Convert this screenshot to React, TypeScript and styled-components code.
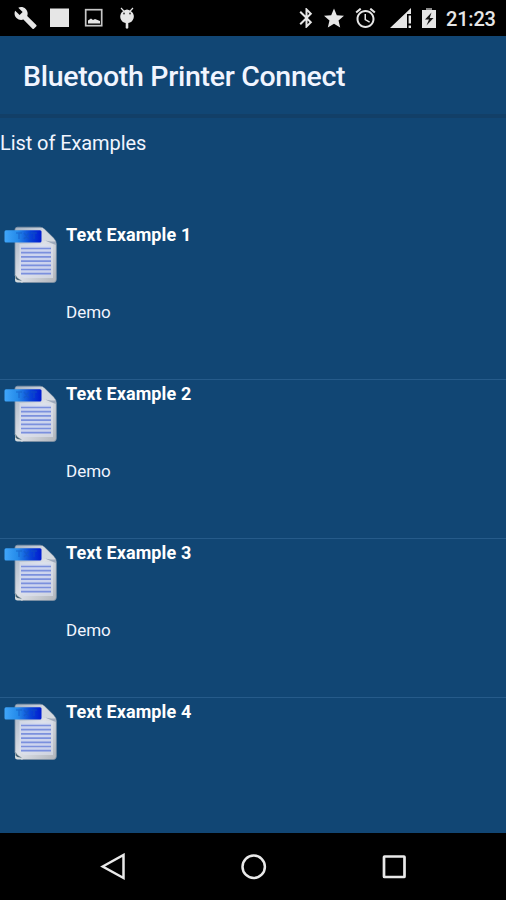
import React from "react";
import styled, { createGlobalStyle } from "styled-components";

const GlobalStyle = createGlobalStyle`
  * { box-sizing: border-box; }
  body { margin: 0; background: #114674; }
`;

const Screen = styled.div`
  width: 506px;
  height: 900px;
  display: flex;
  flex-direction: column;
  overflow: hidden;
  background: #114674;
  color: #f1f5ff;
  font-family: Roboto, "Liberation Sans", sans-serif;
`;

const StatusBar = styled.div`
  flex: none;
  height: 36px;
  padding: 0 10px 0 14px;
  display: flex;
  align-items: center;
  justify-content: space-between;
  background: #000;
  color: #e6e6e6;
`;

const StatusGroup = styled.div<{ $gap: number }>`
  display: flex;
  align-items: center;
  gap: ${(p) => p.$gap}px;
  svg { display: block; flex: none; }
`;

const Clock = styled.span`
  width: 50px;
  margin-left: -1px;
  font-size: 20px;
  line-height: 36px;
  font-weight: 500;
  letter-spacing: -0.2px;
  white-space: nowrap;
  padding-top: 2px;
`;

const AppBar = styled.header`
  flex: none;
  height: 82px;
  padding: 0 23px;
  display: flex;
  align-items: center;
  border-bottom: 4px solid #123f67;
`;

const Title = styled.h1`
  margin: 3px 0 0;
  font-size: 28.5px;
  line-height: 34px;
  font-weight: 500;
  letter-spacing: -0.3px;
  white-space: nowrap;
`;

const Content = styled.main`
  flex: none;
  height: 715px;
  overflow: hidden;
`;

const Heading = styled.h2`
  margin: 0;
  height: 103px;
  padding-top: 13px;
  font-size: 20px;
  line-height: 24px;
  font-weight: 400;
  letter-spacing: -0.08px;
`;

const List = styled.ul`
  margin: 0;
  padding: 0;
  list-style: none;
`;

const Row = styled.li`
  height: 159px;
  padding: 3px 0 0 4px;
  display: flex;
  border-bottom: 1px solid #265b8a;
`;

const Details = styled.div`
  margin-left: 8px;
`;

const ItemTitle = styled.div`
  font-size: 18px;
  line-height: 22px;
  font-weight: 700;
  letter-spacing: 0.12px;
  color: #fff;
`;

const Caption = styled.div`
  margin-top: 55px;
  font-size: 17px;
  line-height: 22px;
`;

const NavBar = styled.nav`
  flex: none;
  height: 67px;
  padding: 0 99px 0 100px;
  display: flex;
  align-items: center;
  justify-content: space-between;
  background: #000;
`;

const DocumentIcon = ({ id }: { id: number }) => (
  <svg width="54" height="60" viewBox="0 0 54 60">
    <defs>
      <linearGradient id={`tab${id}`} x1="0" x2="1">
        <stop offset="0" stopColor="#40a6fa" />
        <stop offset="0.35" stopColor="#258bea" />
        <stop offset="0.7" stopColor="#0844d7" />
        <stop offset="1" stopColor="#001ad0" />
      </linearGradient>
      <linearGradient id={`page${id}`} x1="0" y1="0" x2="1" y2="1">
        <stop offset="0" stopColor="#a3b1c2" />
        <stop offset="0.5" stopColor="#dde0e7" />
        <stop offset="1" stopColor="#b0b4ba" />
      </linearGradient>
    </defs>
    <path d="M13.500 3.200H36q2.500 0 4.500 2L50 14.500q2.300 2.500 2.300 5.500v35.500q0 3-3 3h-32L11 52V5.700q0-2.500 2.500-2.500z" fill={`url(#page${id})`} stroke="#7f91a3" strokeWidth="0.800" />
    <path d="M15.500 20h33.500v34H20l-4.500-4z" fill="#dce0ee" opacity="0.650" />
    <path d="M38 3.800v11q0 2 2 2l11.300.7-1.800-3-9-9z" fill="#d3d8df" />
    <path d="M38.500 15.500q4 2 13.300 2v3.500z" fill="#9da9bc" />
    <rect x="17" y="22.500" width="30" height="28" fill="#c6cff1" opacity="0.650" />
    <path d="M17 24.500h30M17 28.700h30M17 32.900h30M17 37.100h30M17 41.300h30M17 45.500h30M17 49.700h30" stroke="#7b90dd" strokeWidth="1.700" />
    <path d="M11 50l8 8.500h-5.500q-2.500 0-2.500-2.500z" fill="#d4dadd" />
    <path d="M11.500 50.500q1.500 4.500 6.500 6-5 .5-6.500-2z" fill="#4a6575" />
    <rect x="0.500" y="6.200" width="37" height="12.300" rx="1.500" fill={`url(#tab${id})`} />
    <path d="M12 9h6M15 9v6M20 9l5 6M25 9l-5 6M27 9h6M30 9v6" stroke="#1257bd" strokeWidth="1.500" opacity="0.450" fill="none" />
  </svg>
);

const NotificationIcons = () => (
  <StatusGroup $gap={0}>
    <svg width="23" height="22" viewBox="0.800 1 22.200 22" fill="currentColor">
      <path d="M22.700 19l-9.100-9.100c.9-2.300.4-5-1.500-6.900-2-2-5-2.400-7.400-1.300L9 6 6 9 1.600 4.700C.4 7.100.9 10.100 2.900 12.100c1.900 1.900 4.600 2.400 6.900 1.500l9.100 9.100c.4.4 1 .4 1.400 0l2.300-2.300c.5-.4.5-1.100.1-1.400z" />
    </svg>
    <svg width="46" height="20" viewBox="0 0 46 20" fill="currentColor">
      <rect x="13" y="0.500" width="19" height="18.500" />
    </svg>
    <svg width="22" height="20" viewBox="0 0 22 20">
      <rect x="2.700" y="1.700" width="16" height="16" fill="none" stroke="#c7c7c7" strokeWidth="1.700" />
      <path d="M5 15.500v-3l3-2 2 1.500 2-1 5 2v2.500z" fill="currentColor" />
    </svg>
    <svg width="32" height="24" viewBox="0 0 32 24" fill="currentColor">
      <path d="M16 2l2.800 3M28 2l-2.800 3" stroke="currentColor" strokeWidth="1.200" />
      <path d="M17 6Q22 1 27 6q2.700 3 1.500 6.500Q27 16.500 23.300 17v5q-1.300 1.500-2.600 0v-5Q17 16.500 15.500 12.500 14.500 9 17 6z" />
      <circle cx="19" cy="7.500" r="1" fill="#444" />
      <circle cx="25" cy="7.500" r="1" fill="#444" />
    </svg>
  </StatusGroup>
);

const SystemIcons = () => (
  <StatusGroup $gap={11}>
    <svg width="14" height="20" viewBox="5 2 13 20" fill="currentColor">
      <path d="M17.710 7.710L12 2h-1v7.590L6.410 5 5 6.410 10.590 12 5 17.590 6.410 19 11 14.410V22h1l5.710-5.710-4.300-4.290 4.300-4.290zM13 5.830l1.880 1.880L13 9.590V5.830zm1.880 10.460L13 18.170v-3.760l1.880 1.880z" />
    </svg>
    <svg width="20" height="20" viewBox="2 2 20 19" fill="currentColor">
      <path d="M12 17.270L18.180 21l-1.640-7.030L22 9.240l-7.190-.61L12 2 9.190 8.630 2 9.240l5.460 4.730L5.820 21z" />
    </svg>
    <svg width="21" height="20" viewBox="2 2 20 20" fill="currentColor">
      <path d="M22 5.720l-4.600-3.860-1.290 1.530 4.600 3.860L22 5.720zM7.880 3.390L6.600 1.860 2 5.710l1.290 1.530 4.590-3.850zM12.500 8H11v6l4.750 2.850.75-1.230-4-2.370V8zM12 4c-4.970 0-9 4.030-9 9s4.020 9 9 9c4.970 0 9-4.030 9-9s-4.030-9-9-9zm0 16c-3.870 0-7-3.130-7-7s3.130-7 7-7 7 3.130 7 7-3.130 7-7 7z" />
    </svg>
    <svg width="24" height="20" viewBox="-3 0 24 20" fill="currentColor">
      <path d="M0 20L21 0v6h-4v14zM18.600 7.500H21v8h-2.400zM18.600 17.500H21V20h-2.400z" />
    </svg>
    <svg width="14" height="20" viewBox="0 0 14 20">
      <path d="M4 0h6v2H4z" fill="#8c8c8c" />
      <path d="M0 2h14v18H0z" fill="currentColor" />
      <path d="M9.500 4.500L3 11.500h4L4.500 17.500l7-7.500H7.700z" fill="#171717" />
    </svg>
    <Clock>21:23</Clock>
  </StatusGroup>
);

const NavigationIcons = () => (
  <NavBar>
    <svg width="26" height="28" viewBox="0 0 26 28" fill="none" stroke="#e9e9e9" strokeWidth="2.500">
      <path d="M2.700 13.500L23.500 2v23z" />
    </svg>
    <svg width="28" height="28" viewBox="0 0 28 28" fill="none" stroke="#e9e9e9" strokeWidth="2.500">
      <circle cx="13.700" cy="13.800" r="11.200" />
    </svg>
    <svg width="26" height="28" viewBox="0 0 26 28" fill="none" stroke="#e9e9e9" strokeWidth="2.700">
      <rect x="3" y="3.500" width="20.500" height="20.500" rx="0.500" />
    </svg>
  </NavBar>
);

const examples = [1, 2, 3, 4];

export default function App() {
  return (
    <>
      <GlobalStyle />
      <Screen>
        <StatusBar>
          <NotificationIcons />
          <SystemIcons />
        </StatusBar>
        <AppBar>
          <Title>Bluetooth Printer Connect</Title>
        </AppBar>
        <Content>
          <Heading>List of Examples</Heading>
          <List>
            {examples.map((n) => (
              <Row key={n}>
                <DocumentIcon id={n} />
                <Details>
                  <ItemTitle>Text Example {n}</ItemTitle>
                  {n < 4 && <Caption>Demo</Caption>}
                </Details>
              </Row>
            ))}
          </List>
        </Content>
        <NavigationIcons />
      </Screen>
    </>
  );
}
